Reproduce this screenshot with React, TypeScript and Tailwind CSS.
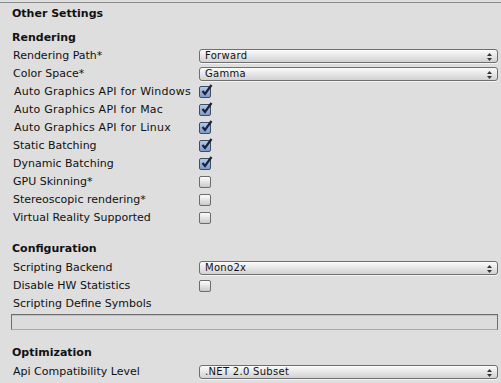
import React from "react";

function Dropdown({ value }: { value: string }) {
  return (
    <div className="flex h-[14px] flex-1 items-center justify-between rounded-[3px] border border-[#6f6f6f] bg-gradient-to-b from-[#fbfbfb] to-[#d2d2d2] pl-[5px] pr-[5px] text-[10px] leading-none tracking-[0.3px] shadow-[0_1px_0_#f4f4f4]">
      <span>{value}</span>
      <svg width="5" height="8" viewBox="0 0 5 8" className="mt-[1px]">
        <path d="M2.5 0 L5 3 H0 Z" fill="#333" />
        <path d="M2.5 8 L5 5 H0 Z" fill="#333" />
      </svg>
    </div>
  );
}

function Checkbox({ checked }: { checked?: boolean }) {
  if (checked) {
    return (
      <div className="relative h-[12px] w-[12px] rounded-[2px] border border-[#3f4d63] bg-gradient-to-b from-[#b5c9e8] to-[#7c9acb]">
        <svg width="14" height="14" viewBox="0 0 14 14" className="absolute left-[0px] top-[-4px]">
          <path d="M2.5 8 L5 11 L11.5 2" stroke="#17233a" strokeWidth="2.2" fill="none" />
        </svg>
      </div>
    );
  }
  return (
    <div className="h-[12px] w-[12px] rounded-[2px] border border-[#6c6c6c] bg-gradient-to-b from-[#fdfdfd] to-[#cacaca]" />
  );
}

function Row({ label, wide, children }: { label: string; wide?: boolean; children?: React.ReactNode }) {
  return (
    <div className="flex h-[18px] items-center">
      <div
        className={
          wide
            ? "w-[186px] shrink-0 whitespace-nowrap pl-[1px] tracking-[0.25px]"
            : "w-[186px] shrink-0 whitespace-nowrap"
        }
      >
        {label}
      </div>
      <div className="flex flex-1 items-center">{children}</div>
    </div>
  );
}

function Header({ text }: { text: string }) {
  return <div className="flex h-[18px] items-center font-bold">{text}</div>;
}

export default function App() {
  return (
    <div className="h-[383px] w-[501px] overflow-hidden bg-[#dedede] font-['DejaVu_Sans',sans-serif] text-[11px] text-[#111]">
      <div className="h-[2px]" />
      <div className="h-[1px] bg-[#8c8c8c]" />
      <div className="flex h-[22px] items-center pl-[12px] font-bold">Other Settings</div>
      <div className="pl-[12px] pr-[3px]">
        <div className="h-[4px]" />
        <Header text="Rendering" />
        <div className="pl-[1px]">
          <Row label="Rendering Path*"><Dropdown value="Forward" /></Row>
          <Row label="Color Space*"><Dropdown value="Gamma" /></Row>
          <Row label="Auto Graphics API for Windows" wide><Checkbox checked /></Row>
          <Row label="Auto Graphics API for Mac" wide><Checkbox checked /></Row>
          <Row label="Auto Graphics API for Linux" wide><Checkbox checked /></Row>
          <Row label="Static Batching"><Checkbox checked /></Row>
          <Row label="Dynamic Batching"><Checkbox checked /></Row>
          <Row label="GPU Skinning*"><Checkbox /></Row>
          <Row label="Stereoscopic rendering*"><Checkbox /></Row>
          <Row label="Virtual Reality Supported"><Checkbox /></Row>
        </div>
        <div className="h-[13px]" />
        <Header text="Configuration" />
        <div className="pl-[1px]">
          <div className="h-[1px]" />
          <Row label="Scripting Backend"><Dropdown value="Mono2x" /></Row>
          <Row label="Disable HW Statistics"><Checkbox /></Row>
          <Row label="Scripting Define Symbols" />
        </div>
        <div className="ml-[-1px] mt-[1px] h-[16px] border border-[#6e6e6e] border-b-[#a8a8a8] bg-[#dcdcdc] shadow-[inset_0_1px_0_#c4c4c4]" />
        <div className="h-[14px]" />
        <Header text="Optimization" />
        <div className="pl-[1px]">
          <div className="h-[1px]" />
          <Row label="Api Compatibility Level"><Dropdown value=".NET 2.0 Subset" /></Row>
        </div>
      </div>
    </div>
  );
}
